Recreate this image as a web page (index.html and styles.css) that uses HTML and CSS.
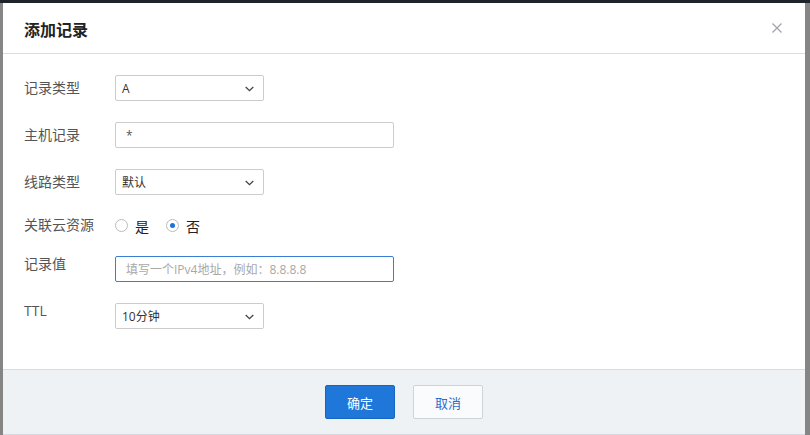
FILE: index.html
```html
<!DOCTYPE html>
<html>
<head>
	<title>添加记录</title>
	<meta charset="utf-8">
	<link rel="stylesheet" href="styles.css">
</head>
<body>
	<div class="dialog">
		<div class="dialog-head">
			<h2>添加记录</h2>
			<svg class="close" width="10" height="10" viewBox="0 0 10 10">
				<path d="M0.5 0.5L9.5 9.5M9.5 0.5L0.5 9.5" stroke="#a3a7ad" stroke-width="1.4" fill="none"/>
			</svg>
		</div>

		<div class="dialog-body">
			<div class="row">
				<label>记录类型</label>
				<div class="select">
					<span>A</span>
					<svg class="arrow" width="9" height="6" viewBox="0 0 9 6"><path d="M0.7 1L4.5 4.6L8.3 1" stroke="#444" stroke-width="1.3" fill="none"/></svg>
				</div>
			</div>
			<div class="row">
				<label>主机记录</label>
				<input class="text" type="text" value="*">
			</div>
			<div class="row">
				<label>线路类型</label>
				<div class="select">
					<span>默认</span>
					<svg class="arrow" width="9" height="6" viewBox="0 0 9 6"><path d="M0.7 1L4.5 4.6L8.3 1" stroke="#444" stroke-width="1.3" fill="none"/></svg>
				</div>
			</div>
			<div class="row row-radio">
				<label>关联云资源</label>
				<div class="radio"><i></i>是</div>
				<div class="radio checked"><i></i>否</div>
			</div>
			<div class="row">
				<label class="top">记录值</label>
				<input class="text focus" type="text" placeholder="填写一个IPv4地址，例如：8.8.8.8">
			</div>
			<div class="row">
				<label class="top">TTL</label>
				<div class="select">
					<span>10分钟</span>
					<svg class="arrow" width="9" height="6" viewBox="0 0 9 6"><path d="M0.7 1L4.5 4.6L8.3 1" stroke="#444" stroke-width="1.3" fill="none"/></svg>
				</div>
			</div>
		</div>

		<div class="dialog-foot">
			<button class="btn primary">确定</button>
			<button class="btn">取消</button>
		</div>
	</div>
</body>
</html>
```

FILE: styles.css
```css
*{
	box-sizing: border-box;
}

body{
	margin: 0;
	height: 435px;
	overflow: hidden;
	background: #858585;
	border-top: 3px solid #1e222a;
	font-family: "Open Sans", "Noto Sans CJK SC", sans-serif;
}

.dialog{
	margin-left: 3px;
	width: 802px;
	background: #fff;
	border-bottom: 1px solid #d6d9dd;
}

.dialog-head{
	height: 51px;
	padding: 1px 23px 0 21px;
	display: flex;
	align-items: center;
	justify-content: space-between;
	border-bottom: 1px solid #dcdcdc;
}

.dialog-head h2{
	margin: 0;
	font-size: 16px;
	font-weight: bold;
	color: #222;
}

.close{
	margin-top: -2px;
}

.dialog-body{
	padding: 21px 0 40px 21px;
	display: flex;
	flex-direction: column;
	gap: 21px;
}

.row{
	display: flex;
	align-items: center;
	height: 26px;
}

.row label{
	width: 91px;
	font-size: 14px;
	color: #555;
	line-height: 20px;
	margin-top: -1px;
}

.row label.top{
	align-self: flex-start;
	line-height: 16px;
	margin-top: 0;
}

.row-radio{
	height: 19px;
}

.select{
	width: 149px;
	height: 26px;
	border: 1px solid #ccc;
	border-radius: 2px;
	padding: 0 9px 0 6px;
	display: flex;
	align-items: center;
	justify-content: space-between;
	font-size: 12px;
	color: #333;
}

.arrow{
	margin-top: 2px;
}

.text{
	width: 279px;
	height: 26px;
	border: 1px solid #ccc;
	border-radius: 2px;
	padding: 0 10px;
	font-family: inherit;
	font-size: 12px;
	color: #555;
	outline: none;
}

.text.focus{
	border-color: #3b7fd4;
}

.text::placeholder{
	color: #a8a8a8;
}

.radio{
	display: flex;
	align-items: center;
	font-size: 14px;
	color: #222;
	margin-right: 17px;
}

.radio i{
	width: 13px;
	height: 13px;
	border: 1px solid #bbb;
	border-radius: 50%;
	margin-right: 7px;
	display: flex;
	align-items: center;
	justify-content: center;
}

.radio.checked i::after{
	content: "";
	width: 5px;
	height: 5px;
	border-radius: 50%;
	background: #1a73d9;
}

.dialog-foot{
	height: 65px;
	background: #eff2f5;
	border-top: 1px solid #d9dde2;
	display: flex;
	justify-content: center;
	align-items: flex-start;
	gap: 18px;
	padding-top: 15px;
}

.btn{
	width: 70px;
	height: 34px;
	border: 1px solid #cfd3d8;
	border-radius: 2px;
	background: #fafbfc;
	color: #2a6fd0;
	font-family: inherit;
	font-size: 13px;
}

.btn.primary{
	background: #1f77d9;
	border-color: #1565c4;
	color: #fff;
}
```
